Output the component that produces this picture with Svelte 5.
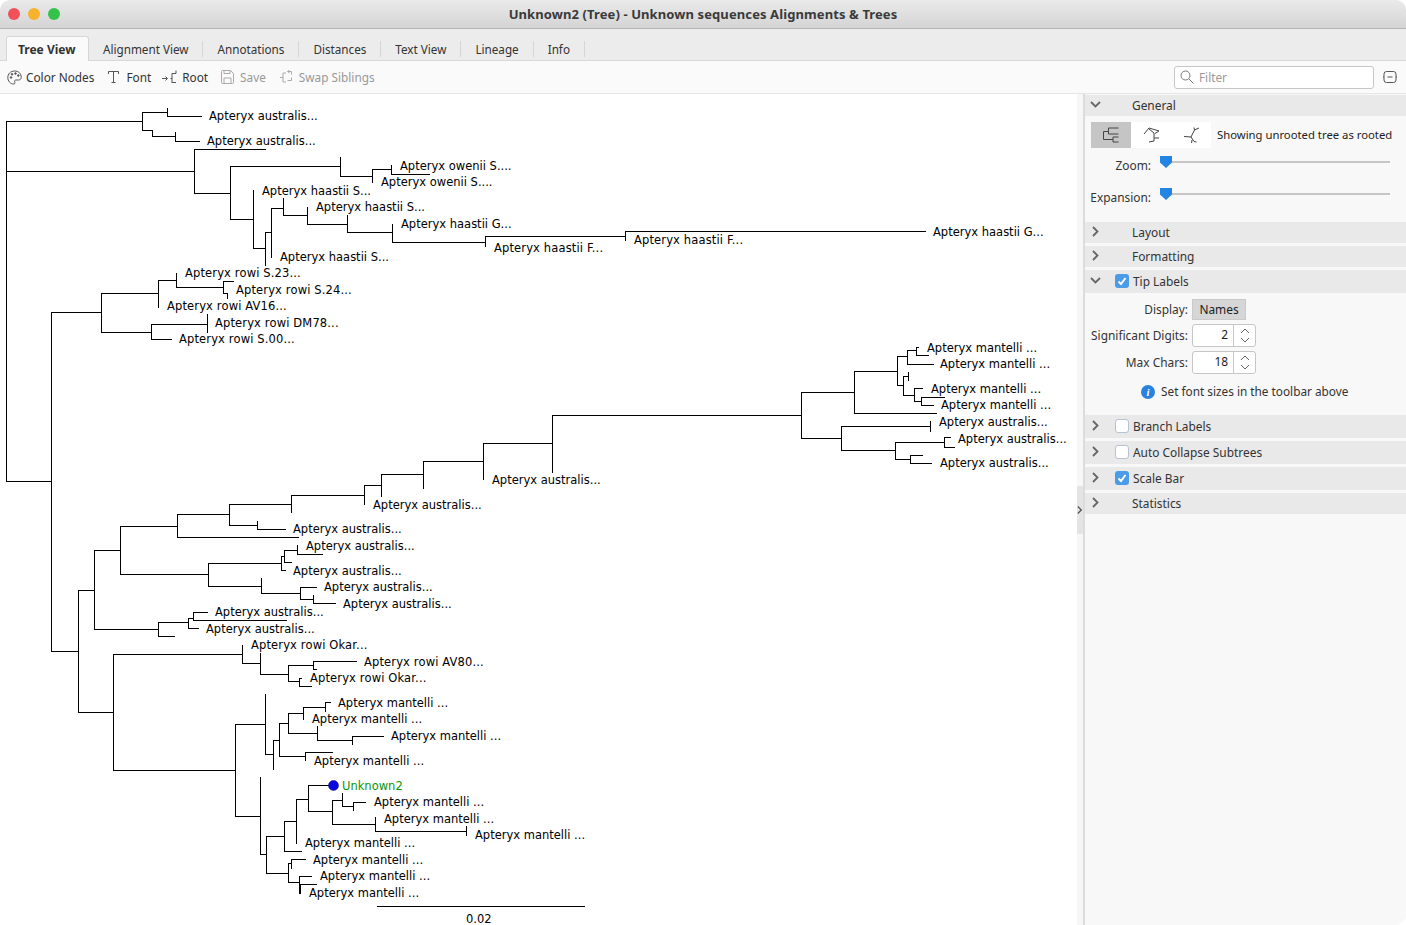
<script>
  const h = [
    [121,6,142],[112,142,167],[116,167,201],[130,142,152],[136,152,175],[141,175,199],
    [171,6,194],[149,194,265],[193,194,230],[166,230,340],[176,340,372],[169,372,391],[174,391,429],
    [219,230,253],[248,253,265],[232,265,271],[208,271,283],[215,283,307],[224,307,347],[232,347,392],[242,392,485],[236,485,625],[231,625,925],
    [312,51,101],[293,101,158],[280,158,176],[287,176,223],[281,223,233],[293,223,227],[332,101,151],[324,151,207],[339,151,171],
    [481,6,51],[651,51,78],[590,78,94],[550,94,120],[526,120,177],[514,177,229],[504,229,291],[525,229,257],[529,257,285],[537,177,298],
    [415,552,801],[443,483,552],[461,423,483],[474,381,423],[485,364,381],[495,291,364],
    [574,120,208],[563,208,281],[556,281,284],[550,284,297],[554,297,322],[562,284,291],[570,281,285],
    [586,208,261],[593,261,300],[587,300,316],[599,300,313],[603,313,335],
    [629,94,158],[622,158,188],[636,158,174],[618,188,193],[612,193,207],[620,193,286],[628,188,198],
    [712,78,113],[654,113,242],[663,242,260],[674,260,288],[665,288,313],[661,313,356],[669,313,316],[681,288,299],[678,299,301],[686,299,311],
    [770,113,235],[724,235,265],[754,265,273],[740,273,279],[723,279,288],[713,288,303],[707,303,325],[702,325,330],[733,288,317],[740,317,352],[736,352,383],[756,279,305],[752,305,332],
    [816,235,260],[854,260,266],[836,266,284],[821,284,296],[799,296,308],[785,308,333],[811,308,332],[800,332,342],[806,342,353],[802,353,365],[824,332,375],[831,375,466],[851,284,301],
    [873,266,288],[863,288,291],[859,291,305],[882,288,299],[876,299,311],[884,299,316],
    [392,801,854],[371,854,897],[356,897,907],[350,907,916],[347,916,918],[355,916,928],[364,907,933],[385,897,903],[376,903,908],[395,903,914],[388,914,922],[401,914,921],[397,921,944],[405,921,933],[413,854,936],
    [438,801,841],[426,841,930],[450,841,895],[442,895,944],[437,944,950],[447,944,954],[459,895,910],[455,910,922],[463,910,931],
    [906,377,584]
  ];
  const v = [
    [6,121,481],[142,112,130],[167,108,116],[152,130,136],[175,132,141],
    [194,149,193],[230,166,219],[340,157,176],[372,169,182],[391,165,174],
    [253,190,248],[265,232,265],[271,208,257],[283,198,215],[307,207,224],[347,215,232],[392,224,242],[485,236,246],[625,231,240],
    [51,312,651],[101,293,332],[158,280,307],[176,273,287],[223,281,293],[227,293,298],[151,324,339],[207,314,332],
    [78,590,712],[94,550,629],[120,526,574],[177,514,537],[229,504,525],[291,495,512],[257,521,529],
    [552,415,472],[483,443,479],[423,461,488],[381,474,496],[364,485,504],
    [208,563,586],[281,556,570],[284,550,562],[297,545,554],[261,578,593],[300,587,599],[313,595,603],
    [158,622,636],[188,618,628],[193,612,620],
    [113,654,770],[242,645,663],[260,653,674],[288,665,681],[313,661,669],[299,678,686],
    [235,724,816],[265,694,754],[273,740,769],[279,723,756],[288,713,733],[303,707,719],[325,702,711],[317,726,740],[352,736,744],[305,752,760],
    [260,777,854],[266,836,873],[284,821,851],[296,799,843],[308,785,811],[332,800,824],[342,793,806],[353,802,810],[375,817,831],[466,826,835],
    [288,863,882],[291,859,868],[299,876,893],[300,884,893],
    [801,392,438],[854,371,413],[897,356,385],[907,350,364],[916,347,355],[903,376,395],[908,372,380],[914,388,401],[921,397,405],
    [841,426,450],[930,421,431],[895,442,459],[944,437,447],[910,455,463]
  ];
  const treePath =
    h.map(([y, a, b]) => `M${a} ${y + 0.5}H${b + 1}`).join('') +
    v.map(([x, a, b]) => `M${x + 0.5} ${a}V${b + 1}`).join('');

  const A = 'Apteryx australis...', M = 'Apteryx mantelli ...';
  const labels = [
    [209,115,A],[207,140,A],[400,165,'Apteryx owenii S....'],[381,181,'Apteryx owenii S....'],
    [262,190,'Apteryx haastii S...'],[316,206,'Apteryx haastii S...'],[401,223,'Apteryx haastii G...'],
    [933,231,'Apteryx haastii G...'],[634,239,'Apteryx haastii F...'],[494,247,'Apteryx haastii F...'],
    [280,256,'Apteryx haastii S...'],[185,272,'Apteryx rowi S.23...'],[236,289,'Apteryx rowi S.24...'],
    [167,305,'Apteryx rowi AV16...'],[215,322,'Apteryx rowi DM78...'],[179,338,'Apteryx rowi S.00...'],
    [927,347,M],[940,363,M],[931,388,M],[941,404,M],[939,421,A],[958,438,A],[940,462,A],
    [492,479,A],[373,504,A],[293,528,A],[306,545,A],[293,570,A],[324,586,A],[343,603,A],[215,611,A],[206,628,A],
    [251,644,'Apteryx rowi Okar...'],[364,661,'Apteryx rowi AV80...'],[310,677,'Apteryx rowi Okar...'],
    [338,702,M],[312,718,M],[391,735,M],[314,760,M],[374,801,M],[384,818,M],[475,834,M],[305,842,M],[313,859,M],[320,875,M],[309,892,M],
    [466,918,'0.02']
  ];
  const tabs = ['Alignment View','Annotations','Distances','Text View','Lineage','Info'];
  const wide = (s) => s.includes('rowi') || s.includes('haastii F');
</script>

<div class="window">
  <header class="titlebar">
    <div class="lights">
      <span class="light red"></span><span class="light yellow"></span><span class="light green"></span>
    </div>
    <div class="title">Unknown2 (Tree) - Unknown sequences Alignments &amp; Trees</div>
  </header>

  <nav class="tabs">
    <div class="tab active">Tree View</div>
    {#each tabs as t}<div class="tab">{t}</div>{/each}
  </nav>

  <div class="toolbar">
    <div class="tool first">
      <svg width="15" height="15" viewBox="0 0 15 15" fill="none" stroke="#555"><path d="M7.5 1C3.5 1 .8 4 .8 7.5s2.6 6.5 5.6 6.500c1.600 0 1.800-1 1.300-2-.5-1.100.2-2 1.400-2h2.400c1.500 0 2.700-.9 2.700-2.600C14.200 3.500 11.500 1 7.500 1z"/><circle cx="4" cy="7.500" r=".8" fill="#555"/><circle cx="5" cy="4.300" r=".8" fill="#555"/><circle cx="8.500" cy="3.500" r=".8" fill="#555"/><circle cx="11.300" cy="5.500" r=".8" fill="#555"/></svg>
      <span>Color Nodes</span>
    </div>
    <div class="tool t-font">
      <svg width="11" height="12" viewBox="0 0 11 12" fill="none" stroke="#555"><path d="M.5 3V.5h10V3M5.500.5v11M3.500 11.500h4"/></svg>
      <span>Font</span>
    </div>
    <div class="tool t-root">
      <svg width="15" height="14" viewBox="0 0 15 14" fill="none" stroke="#555"><path d="M0 8.500h5M3.500 6.500l2 2-2 2M8.500 8.500h1.500M10 3.500V13M10 3.500h4M10 12.500h4M14 .5v3"/></svg>
      <span>Root</span>
    </div>
    <div class="tool t-save off">
      <svg width="13" height="14" viewBox="0 0 13 14" fill="none" stroke="#aaa"><path d="M1.500.5h8l3 3v9a1 1 0 0 1-1 1h-10a1 1 0 0 1-1-1v-11a1 1 0 0 1 1-1zM3 .5v3h6v-3M3 13.500V8h7v5.500"/></svg>
      <span>Save</span>
    </div>
    <div class="tool t-swap off">
      <svg width="13" height="14" viewBox="0 0 13 14" fill="none" stroke="#aaa"><path d="M0 7.500h3M3 3v9h3M6 3H3M7.500 1.500h4v3M11.500 7.500v3h-4M9.500 0l-2 1.500 2 1.500"/></svg>
      <span>Swap Siblings</span>
    </div>
    <div class="filter">
      <svg width="14" height="14" viewBox="0 0 14 14" fill="none" stroke="#777"><circle cx="5.500" cy="5.500" r="4.500"/><path d="M9 9l4.500 4.500"/></svg>
      <span>Filter</span>
    </div>
    <svg class="collapse" width="14" height="14" viewBox="0 0 14 14" fill="none" stroke="#555"><rect x="1" y="1.500" width="12" height="11" rx="2.500"/><path d="M4.500 7h5M0 7h1M13 7h1"/></svg>
  </div>

  <main class="content">
    <div class="tree">
      <svg class="tree-svg" width="1077" height="831" viewBox="0 94 1077 831">
        <path d={treePath} class="branches" />
        <circle cx="333.500" cy="785.500" r="5" class="node" />
        {#each labels as [x, y, s]}
          <text class="tip" class:wide={wide(s)} {x} y={y + 5}>{s}</text>
        {/each}
        <text class="tip unknown" x="342" y="790">Unknown2</text>
      </svg>
    </div>
    <div class="gutter">
      <div class="handle">
        <svg width="7" height="10" viewBox="0 0 7 10" fill="none" stroke="#555" stroke-width="1.500"><path d="M1 1l4 4-4 4"/></svg>
      </div>
    </div>

    <aside class="panel">
      <section class="head general">
        <svg class="chev" width="11" height="11" viewBox="0 0 11 11" fill="none" stroke="#666" stroke-width="1.800"><path d="M1 3l4.500 4.500L10 3"/></svg>
        <span class="htext">General</span>
      </section>
      <div class="modes">
        <div class="mode sel">
          <svg width="17" height="16" viewBox="0 0 17 16" fill="none" stroke="#444"><path d="M15.500 1H5.500V7H15.500M5.500 4.500H.5V12.500H10M10 10H15.500M10 10V15H15.500"/></svg>
        </div>
        <div class="mode">
          <svg width="18" height="18" viewBox="0 0 18 18" fill="none" stroke="#444"><path d="M2 8L7 2L17 5M7 3L12 7V15L7 16M12 12H17M17 5L13 7.500"/></svg>
        </div>
        <div class="mode">
          <svg width="17" height="18" viewBox="0 0 17 18" fill="none" stroke="#444"><path d="M1 10.500L8 11L11.500 4L16 2M11.500 4L11 1.500M8 11L11 15.500L13.500 16M9 14L8.500 17"/></svg>
        </div>
        <span class="modetext">Showing unrooted tree as rooted</span>
      </div>
      <div class="slider-row zoom">
        <span class="lab">Zoom:</span>
        <div class="track"><svg class="thumb" width="12" height="12" viewBox="0 0 12 12"><path d="M0 0h12v6.500L6 12 0 6.500z" /></svg></div>
      </div>
      <div class="slider-row expn">
        <span class="lab">Expansion:</span>
        <div class="track"><svg class="thumb" width="12" height="12" viewBox="0 0 12 12"><path d="M0 0h12v6.500L6 12 0 6.500z" /></svg></div>
      </div>

      <section class="head layout">
        <svg class="chev" width="11" height="11" viewBox="0 0 11 11" fill="none" stroke="#666" stroke-width="1.800"><path d="M3 1l4.500 4.500L3 10"/></svg>
        <span class="htext">Layout</span>
      </section>
      <section class="head gap">
        <svg class="chev" width="11" height="11" viewBox="0 0 11 11" fill="none" stroke="#666" stroke-width="1.800"><path d="M3 1l4.500 4.500L3 10"/></svg>
        <span class="htext">Formatting</span>
      </section>
      <section class="head gap tall">
        <svg class="chev" width="11" height="11" viewBox="0 0 11 11" fill="none" stroke="#666" stroke-width="1.800"><path d="M1 3l4.500 4.500L10 3"/></svg>
        <span class="check on"><svg width="14" height="14" viewBox="0 0 14 14" fill="none" stroke="#fff" stroke-width="2"><path d="M3.500 7.500l2.500 2.500 4.500-6"/></svg></span>
        <span class="ctext">Tip Labels</span>
      </section>
      <div class="form">
        <div class="row r-display"><span class="flab">Display:</span><span class="names">Names</span></div>
        <div class="row r-sig">
          <span class="flab">Significant Digits:</span>
          <div class="spin"><span class="val">2</span><span class="arrows"><svg width="12" height="17" viewBox="0 0 12 17" fill="none" stroke="#666"><path d="M2 6l4-4 4 4M2 11l4 4 4-4"/></svg></span></div>
        </div>
        <div class="row r-max">
          <span class="flab">Max Chars:</span>
          <div class="spin"><span class="val">18</span><span class="arrows"><svg width="12" height="17" viewBox="0 0 12 17" fill="none" stroke="#666"><path d="M2 6l4-4 4 4M2 11l4 4 4-4"/></svg></span></div>
        </div>
        <div class="info">
          <span class="i-dot">i</span>
          <span class="i-text">Set font sizes in the toolbar above</span>
        </div>
      </div>
      <section class="head h23">
        <svg class="chev" width="11" height="11" viewBox="0 0 11 11" fill="none" stroke="#666" stroke-width="1.800"><path d="M3 1l4.500 4.500L3 10"/></svg>
        <span class="check"></span><span class="ctext">Branch Labels</span>
      </section>
      <section class="head gap h23">
        <svg class="chev" width="11" height="11" viewBox="0 0 11 11" fill="none" stroke="#666" stroke-width="1.800"><path d="M3 1l4.500 4.500L3 10"/></svg>
        <span class="check"></span><span class="ctext">Auto Collapse Subtrees</span>
      </section>
      <section class="head gap h23">
        <svg class="chev" width="11" height="11" viewBox="0 0 11 11" fill="none" stroke="#666" stroke-width="1.800"><path d="M3 1l4.500 4.500L3 10"/></svg>
        <span class="check on"><svg width="14" height="14" viewBox="0 0 14 14" fill="none" stroke="#fff" stroke-width="2"><path d="M3.500 7.500l2.500 2.500 4.500-6"/></svg></span>
        <span class="ctext">Scale Bar</span>
      </section>
      <section class="head gap">
        <svg class="chev" width="11" height="11" viewBox="0 0 11 11" fill="none" stroke="#666" stroke-width="1.800"><path d="M3 1l4.500 4.500L3 10"/></svg>
        <span class="htext">Statistics</span>
      </section>
    </aside>
  </main>
</div>

<style>
  :global(body) { margin: 0; background: #fff; overflow: hidden; }
  .window {
    width: 1406px; height: 925px; display: flex; flex-direction: column; overflow: hidden;
    border-radius: 10px; background: #fff; color: #1c1c1c;
    font-family: "Noto Sans", sans-serif; font-size: 11.700px;
  }
  .titlebar {
    height: 28px; flex: none; display: flex; align-items: center; position: relative;
    background: linear-gradient(#eaeaea, #d4d4d4); border-bottom: 1px solid #b4b4b4;
  }
  .lights { display: flex; gap: 8px; margin-left: 8px; }
  .light { width: 12px; height: 12px; border-radius: 50%; }
  .red { background: #f1525a; }
  .yellow { background: #f6b22f; }
  .green { background: #35c24a; }
  .title {
    position: absolute; left: 0; right: 0; text-align: center; font-weight: 700; font-size: 13px;
    letter-spacing: .1px; color: #3a3a3a;
  }
  .tabs {
    height: 32px; flex: none; display: flex; align-items: flex-end; padding-left: 6px;
    background: #ececec; border-bottom: 1px solid #d9d9d9; box-sizing: border-box;
  }
  .tab {
    height: 16px; line-height: 16px; padding: 0 14px; border-right: 1px solid #d6d6d6;
    margin-bottom: 3px; color: #333;
  }
  .tab.active {
    height: 24px; margin-bottom: -1px; line-height: 25px; padding: 0 11px; width: 59px; font-weight: 700; font-size: 12px;
    background: #fafafa; border: 1px solid #d6d6d6; border-bottom: none; border-radius: 3px 3px 0 0;
  }
  .toolbar {
    height: 33px; flex: none; box-sizing: border-box; display: flex; align-items: center;
    background: #fafafa; border-bottom: 1px solid #e6e6e6; position: relative; font-size: 11.800px;
  }
  .tool { display: flex; align-items: center; gap: 4px; color: #333; }
  .tool.off { color: #999; }
  .first { margin-left: 7px; }
  .t-font { margin-left: 14px; gap: 7px; }
  .t-root { margin-left: 11px; gap: 5px; }
  .t-save { margin-left: 13px; gap: 6px; }
  .t-swap { margin-left: 14px; gap: 6px; }
  .filter {
    margin-left: auto; width: 200px; height: 23px; box-sizing: border-box; display: flex; align-items: center;
    gap: 5px; padding-left: 5px; border: 1px solid #c6c6c6; border-radius: 3px; background: #fff; color: #999;
  }
  .collapse { margin: 0 9px; }
  .content { flex: 1; min-height: 0; display: flex; }
  .tree { width: 1077px; flex: none; background: #fff; }
  .tree-svg { display: block; }
  .branches { fill: none; stroke: #000; stroke-width: 1; shape-rendering: crispEdges; }
  .node { fill: #0a0ae0; stroke: #00006a; stroke-width: .5; }
  .tip { font-family: "DejaVu Sans", sans-serif; font-size: 11.500px; fill: #000; }
  .tip.wide { letter-spacing: .14px; }
  .unknown { fill: #0a960a; }
  .gutter { width: 6px; flex: none; background: #f7f7f7; padding-top: 392px; box-sizing: border-box; }
  .handle { height: 48px; background: #e4e4e4; display: flex; align-items: center; justify-content: center; }
  .panel { flex: 1; background: #f8f8f8; border-left: 2px solid #dcdcdc; box-sizing: border-box; font-size: 11.900px; }
  .head {
    height: 21px; display: flex; align-items: center; background: #e9e9e9; color: #333;
    box-sizing: border-box; padding-bottom: 2px;
  }
  .head.general { margin-top: 1px; }
  .head.gap { margin-top: 3px; }
  .head.tall, .head.h23 { height: 23px; }
  .head.layout { margin-top: 14px; }
  .chev { margin-left: 5px; flex: none; }
  .htext { margin-left: 31px; }
  .check {
    width: 14px; height: 14px; margin-left: 14px; box-sizing: border-box; border: 1px solid #b5c3d4; border-radius: 3px; background: #fff; flex: none; display: block;
  }
  .check.on { background: #4a9be8; border: none; }
  .check svg { display: block; }
  .ctext { margin-left: 4px; }
  .modes { display: flex; align-items: center; margin: 6px 0 0 6px; height: 26px; }
  .mode { width: 40px; height: 26px; background: #fff; display: flex; align-items: center; justify-content: center; }
  .mode.sel { background: #c5c5c5; }
  .modetext { margin-left: 6px; font-size: 11.300px; padding-bottom: 2px; }
  .slider-row { display: flex; position: relative; height: 20px; }
  .slider-row.zoom { margin-top: 8px; }
  .slider-row.expn { margin-top: 12px; }
  .lab { width: 66px; text-align: right; margin-top: 1px; display: block; line-height: 16px; color: #333; }
  .track { position: relative; margin: 5px 0 0 9px; width: 230px; height: 2px; background: #c6c6c6; }
  .thumb { position: absolute; left: 0; top: -5px; }
  .thumb path { fill: #2484e4; }
  .form { height: 122px; box-sizing: border-box; padding-top: 6px; }
  .row { display: flex; align-items: center; }
  .r-sig { margin-top: 4px; }
  .r-max { margin-top: 4px; }
  .flab { width: 103px; text-align: right; margin-right: 4px; color: #333; padding-bottom: 2px; }
  .names {
    width: 54px; height: 21px; box-sizing: border-box; display: flex; align-items: center; justify-content: center;
    background: #d6d6d6; border: 1px solid #cacaca; padding-bottom: 2px;
  }
  .spin {
    width: 64px; height: 23px; box-sizing: border-box; display: flex; border: 1px solid #c6c6c6; border-radius: 3px; background: #fff;
  }
  .val { width: 41px; text-align: right; line-height: 19px; padding-right: 5px; box-sizing: border-box; border-right: 1px solid #c6c6c6; }
  .arrows { flex: 1; display: flex; align-items: center; justify-content: center; }
  .info { display: flex; align-items: center; gap: 6px; margin: 9px 0 0 56px; color: #333; }
  .i-text { padding-bottom: 2px; font-size: 11.800px; }
  .i-dot {
    width: 14px; height: 14px; border-radius: 50%; background: #2a82e0; color: #fff; font: italic 700 11px/14px "Liberation Serif", serif; text-align: center;
  }
</style>
